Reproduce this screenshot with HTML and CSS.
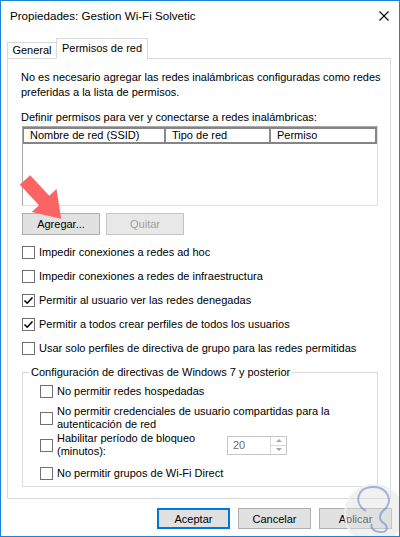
FILE: index.html
```html
<!DOCTYPE html>
<html lang="es">
<head>
    <meta charset="UTF-8">
    <meta name="viewport" content="width=device-width, initial-scale=1.0">
    <title>Propiedades</title>
    <link rel="stylesheet" href="styles.css">
</head>
<body>
    <div class="window">
        <div class="titlebar">
            <span class="title">Propiedades: Gestion Wi-Fi Solvetic</span>
            <svg class="close" viewBox="0 0 10 10"><path d="M0.5 0.5L9.5 9.5M9.5 0.5L0.5 9.5" stroke="#000" stroke-width="1.1"/></svg>
        </div>

        <div class="tabs">
            <div class="tab">General</div>
            <div class="tab active">Permisos de red</div>
        </div>

        <div class="panel">
            <p class="note">No es necesario agregar las redes inalámbricas configuradas como redes<br>preferidas a la lista de permisos.</p>
            <p class="label">Definir permisos para ver y conectarse a redes inalámbricas:</p>

            <div class="list">
                <div class="list-head">
                    <span class="col c1">Nombre de red (SSID)</span>
                    <span class="col c2">Tipo de red</span>
                    <span class="col c3">Permiso</span>
                </div>
            </div>

            <div class="list-buttons">
                <button class="btn">Agregar...</button>
                <button class="btn" disabled>Quitar</button>
            </div>

            <div class="checks">
                <div class="check"><span class="box"></span>Impedir conexiones a redes ad hoc</div>
                <div class="check"><span class="box"></span>Impedir conexiones a redes de infraestructura</div>
                <div class="check"><span class="box checked"><svg viewBox="0 0 11 11"><path d="M1.5 5.5L4.2 8.2L9.5 2.5" fill="none" stroke="#000" stroke-width="1.6"/></svg></span>Permitir al usuario ver las redes denegadas</div>
                <div class="check"><span class="box checked"><svg viewBox="0 0 11 11"><path d="M1.5 5.5L4.2 8.2L9.5 2.5" fill="none" stroke="#000" stroke-width="1.6"/></svg></span>Permitir a todos crear perfiles de todos los usuarios</div>
                <div class="check"><span class="box"></span>Usar solo perfiles de directiva de grupo para las redes permitidas</div>
            </div>

            <fieldset class="group">
                <legend>Configuración de directivas de Windows 7 y posterior</legend>
                <div class="sub r1"><span class="box"></span><span>No permitir redes hospedadas</span></div>
                <div class="sub r2"><span class="box"></span><span>No permitir credenciales de usuario compartidas para la<br>autenticación de red</span></div>
                <div class="sub r3">
                    <span class="box"></span>
                    <span class="lock-label">Habilitar período de bloqueo<br>(minutos):</span>
                    <div class="spin">
                        <span class="spin-value">20</span>
                        <span class="spin-btns">
                            <span class="spin-up"><i class="up"></i></span>
                            <span class="spin-down"><i class="down"></i></span>
                        </span>
                    </div>
                </div>
                <div class="sub r4"><span class="box"></span><span>No permitir grupos de Wi-Fi Direct</span></div>
            </fieldset>
        </div>

        <div class="footer">
            <button class="btn wide default">Aceptar</button>
            <button class="btn wide">Cancelar</button>
            <button class="btn wide">Aplicar</button>
        </div>

        <!-- red arrow pointing at Agregar -->
        <svg class="arrow" width="400" height="537" viewBox="0 0 400 537">
            <g transform="translate(25 180) rotate(47)">
                <polygon points="0,-7 28,-7 28,-17 53,0 28,17 28,7 0,7" fill="#fb6464"/>
            </g>
        </svg>

        <!-- watermark -->
        <svg class="mark" width="400" height="537" viewBox="0 0 400 537">
            <circle cx="374" cy="514" r="29" fill="rgba(225,225,225,0.45)" stroke="rgba(240,240,240,0.9)" stroke-width="2"/>
            <path d="M366 511 C354 504 356 488 372 487 C388 486 394 502 384 510 C379 514 379 519 382 522 C388 525 389 532 381 532 C374 532 370 528 372 524" fill="none" stroke="rgba(90,130,195,0.55)" stroke-width="2"/>
        </svg>
    </div>
</body>
</html>
```

FILE: styles.css
```css
*{
    margin: 0;
    padding: 0;
    box-sizing: border-box;
}
body{
    font-family: "Liberation Sans", Arial, sans-serif;
    font-size: 11px;
    color: #000;
    background-color: #fff;
}
.window{
    width: 400px;
    height: 537px;
    border: 1px solid #1883d7;
    background-color: #fff;
    position: relative;
    overflow: hidden;
}
.titlebar{
    height: 29px;
    display: flex;
    align-items: center;
    justify-content: space-between;
    padding: 0 10px 0 9px;
}
.title{
    font-size: 11.6px;
    line-height: 16px;
}
.close{
    width: 10px;
    height: 10px;
}
.tabs{
    display: flex;
    align-items: flex-end;
    height: 20px;
    margin: 8px 0 0 6px;
    position: relative;
    z-index: 1;
}
.tab{
    width: 50px;
    height: 16px;
    border: 1px solid #d9d9d9;
    border-bottom: none;
    text-align: center;
    line-height: 15px;
    white-space: nowrap;
    background-color: #fff;
}
.tab.active{
    width: 92px;
    height: 21px;
    margin: 0 0 -1px -1px;
    padding-top: 2px;
}
.panel{
    margin-left: 6px;
    width: 384px;
    height: 441px;
    border: 1px solid #d9d9d9;
    padding: 11px 12px 0 13px;
}
.note,
.label{
    line-height: 15px;
    white-space: nowrap;
}
.label{
    margin-top: 10px;
}
.list{
    width: 356px;
    height: 80px;
    margin: 1px 0 0 1px;
    border: 1px solid #e0e0e0;
    border-left-color: #a8a8a8;
    border-top-color: #a8a8a8;
}
.list-head{
    display: flex;
    width: 354px;
    height: 17px;
    border: 2px solid #858585;
    border-left-width: 1px;
    line-height: 13px;
}
.col{
    padding-left: 6px;
    white-space: nowrap;
}
.c1{
    width: 142px;
    border-right: 2px solid #8a8a8a;
}
.c2{
    width: 105px;
    border-right: 2px solid #8a8a8a;
}
.list-buttons{
    display: flex;
    gap: 6px;
    margin: 7px 0 0 1px;
}
.btn{
    width: 78px;
    height: 22px;
    background-color: #e1e1e1;
    border: 1px solid #adadad;
    font: inherit;
    color: #000;
}
.btn:disabled{
    color: #a0a0a0;
    background-color: #e8e8e8;
    border-color: #c4c4c4;
}
.checks{
    margin: 5px 0 0 1px;
}
.check{
    display: flex;
    align-items: center;
    height: 24px;
    white-space: nowrap;
}
.box{
    width: 13px;
    height: 13px;
    flex: none;
    border: 1px solid #707070;
    background-color: #fff;
    margin-right: 4px;
    display: flex;
}
.box svg{
    width: 11px;
    height: 11px;
}
.group{
    width: 356px;
    margin: 5px 0 0 1px;
    border: 1px solid #dcdcdc;
    padding: 0 0 1px 0;
}
.group legend{
    margin-left: 6px;
    padding: 0 2px;
    line-height: 14px;
}
.sub{
    display: flex;
    align-items: center;
    margin-left: 17px;
    line-height: 13px;
    white-space: nowrap;
}
.r1{
    height: 24px;
}
.r2{
    height: 26px;
    margin-top: 2px;
}
.r3{
    height: 26px;
    margin-top: 1px;
}
.r4{
    height: 24px;
    margin-top: 3px;
}
.lock-label{
    width: 170px;
    flex: none;
}
.spin{
    display: flex;
    width: 60px;
    height: 19px;
    border: 1px solid #c6c6c6;
}
.spin-value{
    flex: 1;
    padding-left: 5px;
    line-height: 17px;
    color: #6d6d6d;
}
.spin-btns{
    width: 16px;
    display: flex;
    flex-direction: column;
    border-left: 1px solid #dadada;
}
.spin-up,
.spin-down{
    flex: 1;
    display: flex;
    align-items: center;
    justify-content: center;
}
.spin-up{
    border-bottom: 1px solid #dadada;
}
.up{
    border-left: 3px solid transparent;
    border-right: 3px solid transparent;
    border-bottom: 3px solid #a6a6a6;
}
.down{
    border-left: 3px solid transparent;
    border-right: 3px solid transparent;
    border-top: 3px solid #a6a6a6;
}
.footer{
    display: flex;
    justify-content: flex-end;
    gap: 8px;
    margin-top: 9px;
    padding-right: 7px;
}
.btn.wide{
    width: 73px;
    height: 21px;
}
.btn.default{
    border: 2px solid #0078d7;
}
.arrow,
.mark{
    position: absolute;
    left: -1px;
    top: -1px;
    pointer-events: none;
}
```
